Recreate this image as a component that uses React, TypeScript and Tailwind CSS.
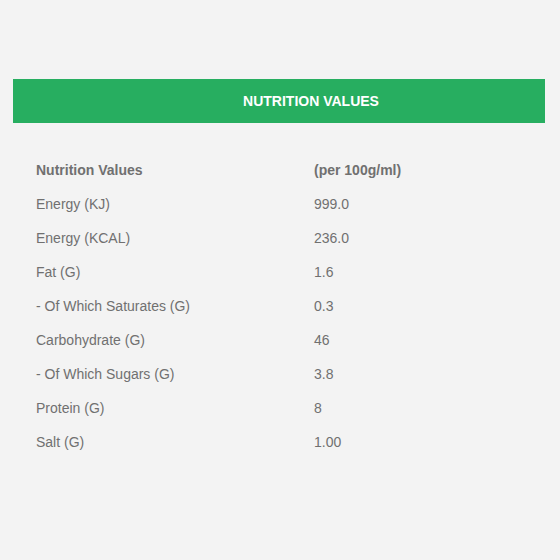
const rows: Array<[string, string]> = [
  ["Energy (KJ)", "999.0"],
  ["Energy (KCAL)", "236.0"],
  ["Fat (G)", "1.6"],
  ["- Of Which Saturates (G)", "0.3"],
  ["Carbohydrate (G)", "46"],
  ["- Of Which Sugars (G)", "3.8"],
  ["Protein (G)", "8"],
  ["Salt (G)", "1.00"],
];

export default function App() {
  return (
    <div className="min-h-[560px] w-[560px] bg-[#f3f3f3] pt-[79px] font-['Liberation_Sans',Arial,sans-serif]">
      <div className="mx-[13px] flex h-[44px] w-[532px] items-center justify-center bg-[#27ae60] pt-[1px] pl-[64px] text-[14px] font-bold text-white">
        NUTRITION VALUES
      </div>
      <div className="mx-[13px] mt-[30px] px-[23px] text-[14px] text-[#707070]">
        <div className="grid h-[34px] grid-cols-[278px_1fr] items-center font-bold">
          <span>Nutrition Values</span>
          <span>(per 100g/ml)</span>
        </div>
        {rows.map(([label, value]) => (
          <div key={label} className="grid h-[34px] grid-cols-[278px_1fr] items-center">
            <span>{label}</span>
            <span>{value}</span>
          </div>
        ))}
      </div>
    </div>
  );
}
